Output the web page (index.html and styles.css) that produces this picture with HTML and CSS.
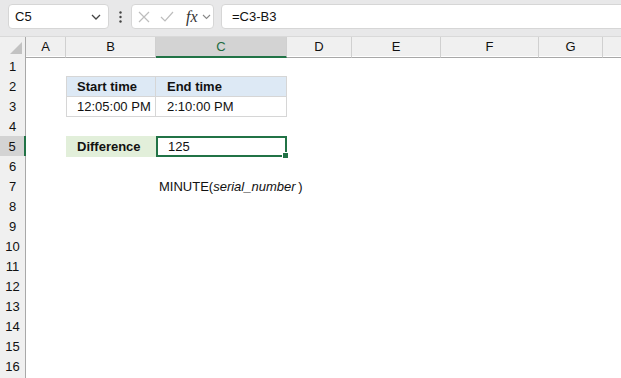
FILE: index.html
```html
<!DOCTYPE html>
<html lang="en">
<head>
    <meta charset="UTF-8">
    <title>MINUTE function</title>
    <link rel="stylesheet" href="styles.css">
</head>
<body>
    <div class="toolbar">
        <div class="namebox">
            <span>C5</span>
            <svg class="chev" width="10" height="6" viewBox="0 0 10 6"><path d="M1 1l4 4 4-4" fill="none" stroke="#444" stroke-width="1.3"/></svg>
        </div>
        <div class="dots">
            <svg width="3" height="12" viewBox="0 0 3 12"><circle cx="1.5" cy="1.5" r="1.2" fill="#444"/><circle cx="1.5" cy="6" r="1.2" fill="#444"/><circle cx="1.5" cy="10.5" r="1.2" fill="#444"/></svg>
        </div>
        <div class="fxbox">
            <svg width="12" height="12" viewBox="0 0 12 12"><path d="M1 1l10 10M11 1L1 11" stroke="#bdbdbd" stroke-width="1.2"/></svg>
            <svg width="14" height="11" viewBox="0 0 14 11"><path d="M1 6l4 4 8-9" fill="none" stroke="#bdbdbd" stroke-width="1.2"/></svg>
            <span class="fx">fx</span>
            <svg width="9" height="6" viewBox="0 0 9 6"><path d="M1 1l3.5 3.5L8 1" fill="none" stroke="#888" stroke-width="1.1"/></svg>
        </div>
        <div class="formula">=C3-B3</div>
    </div>

    <div class="sheet">
        <div class="row colheads">
            <div class="corner"><svg width="12" height="12" viewBox="0 0 12 12"><path d="M12 0v12H0z" fill="#c2c2c2"/></svg></div>
            <div class="ch">A</div>
            <div class="ch">B</div>
            <div class="ch sel">C</div>
            <div class="ch">D</div>
            <div class="ch">E</div>
            <div class="ch">F</div>
            <div class="ch">G</div>
            <div class="ch last"></div>
        </div>
        <div class="row"><div class="rh">1</div></div>
        <div class="row">
            <div class="rh">2</div><div></div>
            <div class="cell tbl thead">Start time</div>
            <div class="cell tbl thead">End time</div>
        </div>
        <div class="row">
            <div class="rh">3</div><div></div>
            <div class="cell tbl">12:05:00 PM</div>
            <div class="cell tbl">2:10:00 PM</div>
        </div>
        <div class="row"><div class="rh">4</div></div>
        <div class="row">
            <div class="rh sel">5</div><div></div>
            <div class="cell label">Difference</div>
            <div class="cell active">125<span class="handle"></span></div>
        </div>
        <div class="row"><div class="rh">6</div></div>
        <div class="row">
            <div class="rh">7</div><div></div><div></div>
            <div class="cell plain">MINUTE(<i>serial_number</i>&thinsp;)</div>
        </div>
        <div class="row"><div class="rh">8</div></div>
        <div class="row"><div class="rh">9</div></div>
        <div class="row"><div class="rh">10</div></div>
        <div class="row"><div class="rh">11</div></div>
        <div class="row"><div class="rh">12</div></div>
        <div class="row"><div class="rh">13</div></div>
        <div class="row"><div class="rh">14</div></div>
        <div class="row"><div class="rh">15</div></div>
        <div class="row"><div class="rh">16</div></div>
        <div class="row"><div class="rh"></div></div>
    </div>
</body>
</html>
```

FILE: styles.css
```css
body {
    margin: 0;
    width: 621px;
    height: 378px;
    overflow: hidden;
    background: #fff;
    font-family: 'Liberation Sans', Arial, sans-serif;
    font-size: 13px;
    color: #111;
}

.toolbar {
    height: 37px;
    box-sizing: border-box;
    background: #e8e8e9;
    border-bottom: 1px solid #d9d9d9;
    display: flex;
    align-items: flex-start;
    padding: 4px 0 0 8px;
    overflow: hidden;
}

.namebox {
    width: 101px;
    height: 25px;
    box-sizing: border-box;
    background: #fff;
    border: 1px solid #d6d6d6;
    border-radius: 4px;
    display: flex;
    align-items: center;
    justify-content: space-between;
    padding: 0 7px 0 6px;
    font-size: 13px;
}

.dots {
    width: 22px;
    height: 25px;
    display: flex;
    align-items: center;
    justify-content: center;
}

.fxbox {
    width: 83px;
    height: 25px;
    box-sizing: border-box;
    background: #fff;
    border: 1px solid #d6d6d6;
    border-radius: 4px;
    display: flex;
    align-items: center;
    gap: 10px;
    padding-left: 6px;
}

.fx {
    font-family: 'Liberation Serif', serif;
    font-style: italic;
    font-size: 16px;
    margin-left: 2px;
    margin-right: -6px;
    color: #333;
}

.formula {
    margin-left: 7px;
    flex: 1;
    height: 25px;
    box-sizing: border-box;
    background: #fff;
    border: 1px solid #d6d6d6;
    border-radius: 4px;
    margin-right: -10px;
    padding-left: 10px;
    line-height: 23px;
    font-size: 13px;
}

.sheet {
    display: flex;
    flex-direction: column;
}

.row {
    display: grid;
    grid-template-columns: 26px 40px 90px 131px 65px 89px 98px 64px 1fr;
    height: 20px;
}

.colheads {
    height: 19px;
    background: #f0f0f0;
}

.corner, .ch {
    box-sizing: border-box;
    border-right: 1px solid #d0d0d0;
    border-bottom: 1px solid #a8a8a8;
}

.corner {
    display: flex;
    align-items: flex-end;
    justify-content: flex-end;
    padding: 0 3px 3px 0;
    border-right-color: #a8a8a8;
}

.ch {
    text-align: center;
    line-height: 18px;
    padding-top: 1px;
}

.ch.last {
    border-right: none;
}

.ch.sel {
    background: #d3d3d3;
    border-bottom: 2px solid #217346;
    color: #1d6b40;
}

.rh {
    box-sizing: border-box;
    background: #f0f0f0;
    border-right: 1px solid #a8a8a8;
    border-bottom: 1px solid #d0d0d0;
    text-align: center;
    line-height: 18px;
    padding-top: 2px;
}

.rh.sel {
    background: #d3d3d3;
    border-right: 2px solid #217346;
}

.cell {
    box-sizing: border-box;
    line-height: 18px;
    padding: 2px 0 0 11px;
    white-space: nowrap;
}

.tbl {
    border-right: 1px solid #d6d6d6;
    border-bottom: 1px solid #d6d6d6;
}

.tbl:nth-child(3) {
    border-left: 1px solid #d6d6d6;
    padding-left: 10px;
}

.thead {
    background: #dde9f5;
    font-weight: bold;
    border-top: 1px solid #d6d6d6;
    padding-top: 1px;
}

.label {
    background: #e2efda;
    font-weight: bold;
}

.active {
    position: relative;
    border: 2px solid #217346;
    line-height: 15px;
    padding: 1px 0 0 10px;
}

.handle {
    position: absolute;
    right: -4px;
    bottom: -4px;
    width: 5px;
    height: 5px;
    background: #217346;
    border: 1px solid #fff;
}

.plain {
    padding-left: 3px;
    overflow: visible;
}
```
